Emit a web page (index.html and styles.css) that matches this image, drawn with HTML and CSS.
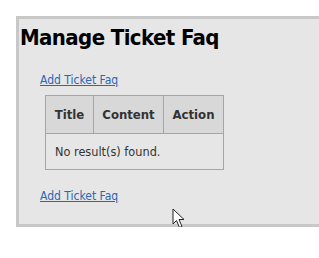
FILE: index.html
```html
<!DOCTYPE html>
<html lang="en">
<head>
  <meta charset="UTF-8"/>
  <title>Manage Ticket Faq</title>
  <link rel="stylesheet" href="styles.css">
</head>
<body>
  <div class="panel">
    <h1>Manage Ticket Faq</h1>
    <a class="add-link" href="#">Add Ticket Faq</a>
    <table class="grid">
      <thead>
        <tr>
          <th class="col-title">Title</th>
          <th class="col-content">Content</th>
          <th class="col-action">Action</th>
        </tr>
      </thead>
      <tbody>
        <tr>
          <td colspan="3">No result(s) found.</td>
        </tr>
      </tbody>
    </table>
    <a class="add-link" href="#">Add Ticket Faq</a>

    <!-- mouse pointer caught in the screenshot -->
    <svg class="cursor" width="14" height="22" viewBox="0 0 14 22">
      <path d="M1 1 L1 16 L4.5 12.5 L7.5 19.5 L10 18.5 L7 11.5 L12 11.5 Z" fill="#fff" stroke="#222" stroke-width="1"/>
    </svg>
  </div>
</body>
</html>
```

FILE: styles.css
```css
/* RESET */
* { box-sizing:border-box; }
html, body {
  margin:0;
  padding:0;
  background:#fff;
  font-family:"DejaVu Sans Condensed","DejaVu Sans",Verdana,sans-serif;
  color:#222;
  overflow:hidden;
}

/* PANEL */
.panel {
  position:relative;
  margin:16px 0 0 16px;
  width:303px;
  height:211px;
  background:#e6e6e6;
  border:3px solid #c8c8c8;
  border-right:none;
  padding:0 0 0 1px;
}
.panel h1 {
  margin:0;
  padding-top:5px;
  font-size:22px;
  letter-spacing:-0.6px;
  font-weight:bold;
  color:#000;
  line-height:28px;
}

/* LINKS */
.add-link {
  display:block;
  width:max-content;
  margin-left:20px;
  font-size:12px;
  line-height:14px;
  color:#2a66b5;
  text-decoration:underline;
}
.panel h1 + .add-link { margin-top:21px; }
.grid + .add-link { margin-top:19px; }

/* TABLE */
.grid {
  margin:8px 0 0 25px;
  border-collapse:collapse;
  font-size:13px;
}
.grid th {
  background:#d8d8d8;
  color:#333;
  font-weight:bold;
  height:38px;
  padding:0 8px;
  border:1px solid #a5a5a5;
}
.grid .col-title { width:48px; }
.grid .col-content { width:70px; }
.grid .col-action { width:60px; }
.grid td {
  height:36px;
  padding:0 9px;
  font-size:12.6px;
  color:#333;
  border:1px solid #a5a5a5;
}

/* POINTER */
.cursor {
  position:absolute;
  left:153px;
  top:189px;
}
```
